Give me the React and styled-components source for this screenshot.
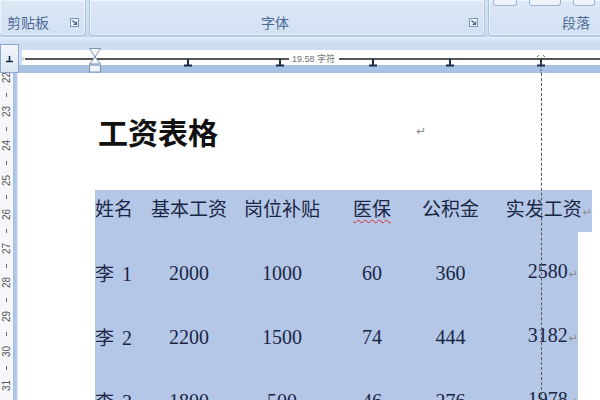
import { Fragment } from 'react';
import styled, { createGlobalStyle } from 'styled-components';

const GlobalStyle = createGlobalStyle`
  html, body {
    margin: 0;
    padding: 0;
    background: #fff;
    overflow: hidden;
  }
  body {
    font-family: "Noto Sans CJK SC", "Liberation Sans", sans-serif;
  }
`;

const Screen = styled.div`
  width: 600px;
  height: 400px;
  display: flex;
  flex-direction: column;
  overflow: hidden;
`;

const Ribbon = styled.div`
  height: 36px;
  flex-shrink: 0;
  display: flex;
  gap: 3px;
  background: linear-gradient(#d6e3f3, #cadcf1);
`;

const Group = styled.div`
  width: ${(p) => p.$w}px;
  margin-left: ${(p) => p.$ml || 0}px;
  flex-shrink: 0;
  display: flex;
  flex-direction: column;
  justify-content: space-between;
  border: 1px solid #adc4e0;
  border-top: none;
  border-radius: 0 0 4px 4px;
  background: linear-gradient(#dde8f6, #d2e1f3);
  box-shadow: inset 0 0 0 1px rgba(255, 255, 255, 0.55);
  box-sizing: border-box;
`;

const TopButtons = styled.div`
  display: flex;
  gap: 12px;
  padding-left: 4px;
  height: 7px;
`;

const MiniButton = styled.div`
  width: ${(p) => p.$w}px;
  height: 5px;
  border: 1px solid #9db4d4;
  border-top: none;
  border-radius: 0 0 3px 3px;
  background: #eef3fa;
`;

const LabelRow = styled.div`
  height: 20px;
  display: flex;
  align-items: center;
  padding: 0 6px 3px 0;
`;

const Label = styled.span`
  margin-left: ${(p) => p.$indent}px;
  font-size: 14px;
  line-height: 16px;
  color: #4d6a96;
`;

const Launcher = styled.svg`
  margin-left: auto;
  width: 9px;
  height: 9px;
`;

const Band = styled.div`
  height: 8px;
  flex-shrink: 0;
  background: linear-gradient(#e4edf8, #cbdcf0);
  border-top: 1px solid #c0d3ec;
  box-sizing: border-box;
`;

const RulerRow = styled.div`
  height: 29px;
  flex-shrink: 0;
  display: flex;
`;

const TabBox = styled.div`
  width: 19px;
  flex-shrink: 0;
  box-sizing: border-box;
  border: 1px solid #8eaad2;
  background: linear-gradient(#f2f6fb, #dce7f5);
  display: flex;
  align-items: center;
  justify-content: center;
`;

const HRuler = styled.div`
  flex: 1;
  position: relative;
  display: flex;
  flex-direction: column;
  background: #cfdef1;
`;

const RulerTop = styled.div`
  height: 6px;
  background: #cddcf0;
`;

const RulerWhite = styled.div`
  height: 15px;
  margin-left: 3px;
  background: #fff;
`;

const RulerBottom = styled.div`
  height: 8px;
  background: #a9c2e4;
`;

const RulerDrawing = styled.svg`
  position: absolute;
  inset: 0;
  width: 100%;
  height: 100%;
`;

const Body = styled.div`
  flex: 1;
  display: flex;
  min-height: 0;
`;

const VRuler = styled.div`
  width: 18px;
  flex-shrink: 0;
  display: flex;
`;

const VNumbers = styled.div`
  width: 13px;
  background: #f5f7fa;
  display: flex;
  flex-direction: column;
  align-items: center;
  overflow: hidden;
`;

const VList = styled.div`
  margin-top: -4px;
  display: flex;
  flex-direction: column;
  align-items: center;
`;

const VNum = styled.span`
  height: 17.1px;
  display: flex;
  align-items: center;
  font-family: "Liberation Sans", sans-serif;
  font-size: 10px;
  color: #555;
  transform: rotate(-90deg);
`;

const VTick = styled.span`
  height: 17.1px;
  display: flex;
  align-items: center;
  &::before {
    content: '';
    display: block;
    width: 1px;
    height: 4px;
    background: #666;
  }
`;

const VStrip = styled.div`
  width: 5px;
  background: linear-gradient(90deg, #a4bfe2, #b7cdea);
  border-right: 1px solid #dfe8f4;
  box-sizing: border-box;
`;

const Page = styled.div`
  flex: 1;
  position: relative;
  background: #fff;
  padding: 41px 0 0 77px;
`;

const TitleLine = styled.div`
  display: flex;
  align-items: center;
  height: 34px;
  margin-left: 3px;
`;

const Title = styled.h1`
  margin: 0;
  font-size: 30px;
  line-height: 34px;
  font-weight: 700;
  color: #111;
`;

const Mark = styled.span`
  font-family: "DejaVu Sans", sans-serif;
  font-size: ${(p) => p.$size || 11}px;
  color: #8a8a8a;
  margin-left: ${(p) => p.$ml || 1}px;
`;

const Table = styled.div`
  margin-top: 42px;
  color: #1a2644;
`;

const cols = '45px 98px 88px 92px 65px 1fr';

const HeadRow = styled.div`
  display: grid;
  grid-template-columns: ${cols};
  width: 497px;
  height: 42px;
  padding-top: 7px;
  box-sizing: border-box;
  background: #b4c7e7;
  align-items: start;
`;

const Rows = styled.div`
  width: 483px;
  padding-top: 9px;
  background: #b4c7e7;
`;

const Row = styled.div`
  display: grid;
  grid-template-columns: ${cols};
  height: 64px;
  align-items: center;
`;

const HeadCell = styled.div`
  text-align: ${(p) => p.$align || 'center'};
  font-size: 19px;
  line-height: 22px;
  white-space: nowrap;
`;

const Cell = styled.div`
  text-align: ${(p) => p.$align || 'center'};
  font-family: "Liberation Serif", "Noto Sans CJK SC", serif;
  font-size: 20px;
  line-height: 22px;
  white-space: nowrap;
`;

const Name = styled.span`
  font-family: "Noto Sans CJK SC", sans-serif;
  font-size: 19px;
  margin-right: 8px;
`;

const Spell = styled.span`
  text-decoration: underline wavy #d03030;
  text-decoration-thickness: 1px;
  text-underline-offset: 3px;
`;

const Guide = styled.div`
  position: absolute;
  left: 523px;
  top: 0;
  bottom: 0;
  border-left: 1px dashed #555;
`;

const data = [
  ['李', '1', '2000', '1000', '60', '360', '2580'],
  ['李', '2', '2200', '1500', '74', '444', '3182'],
  ['李', '3', '1800', '500', '46', '276', '1978'],
];

const vNums = [22, 23, 24, 25, 26, 27, 28, 29, 30, 31];

function LaunchIcon() {
  return (
    <Launcher viewBox="0 0 9 9">
      <rect x="0.5" y="0.5" width="8" height="8" fill="#eef3fa" stroke="#7d95b8" />
      <path d="M2.5 2.5 L6.5 6.5 M6.5 3.5 V6.5 H3.5" stroke="#4a6289" strokeWidth="1.2" fill="none" />
    </Launcher>
  );
}

function Tab({ x }) {
  return (
    <path d={`M${x} 59 V65 M${x - 4} 65.5 H${x + 4}`} stroke="#1c2a48" strokeWidth="2" fill="none" />
  );
}

export default function App() {
  return (
    <Screen>
      <GlobalStyle />
      <Ribbon>
        <Group $w={87} $ml={-1}>
          <span />
          <LabelRow>
            <Label $indent={7}>剪贴板</Label>
            <LaunchIcon />
          </LabelRow>
        </Group>
        <Group $w={396}>
          <span />
          <LabelRow>
            <Label $indent={171}>字体</Label>
            <LaunchIcon />
          </LabelRow>
        </Group>
        <Group $w={120}>
          <TopButtons>
            <MiniButton $w={22} />
            <MiniButton $w={30} />
            <MiniButton $w={20} />
          </TopButtons>
          <LabelRow>
            <Label $indent={73}>段落</Label>
          </LabelRow>
        </Group>
      </Ribbon>
      <Band />
      <RulerRow>
        <TabBox>
          <svg width="9" height="8" viewBox="0 0 9 8">
            <path d="M4.5 1 V6 M1 6.5 H8" stroke="#1c2a48" strokeWidth="1.6" fill="none" />
          </svg>
        </TabBox>
        <HRuler>
          <RulerTop />
          <RulerWhite />
          <RulerBottom />
          <RulerDrawing viewBox="19 44 581 29" preserveAspectRatio="none">
            <path d="M22 58 H24 M22 60 H24" stroke="#999" strokeWidth="0.8" />
            <path d="M25 59 H289 M339 59 H600" stroke="#1f1f1f" strokeWidth="1.3" />
            <text x="292" y="62" fontSize="9" fill="#6f6f6f" fontFamily="Liberation Sans, Noto Sans CJK SC, sans-serif">19.58 字符</text>
            <path d="M89.5 48.5 H100.5 L95 57 Z" fill="#f6f8fb" stroke="#7b92b3" />
            <path d="M95 57 L100.5 64 H89.5 Z" fill="#f6f8fb" stroke="#7b92b3" />
            <rect x="89.5" y="65" width="11" height="7" fill="#eef2f8" stroke="#7b92b3" />
            <Tab x={188} />
            <Tab x={280} />
            <Tab x={373} />
            <Tab x={450} />
            <Tab x={541} />
            <path d="M537 57 l2 -2 M545 57 l-2 -2" stroke="#555" strokeWidth="0.8" />
            <path d="M541 62 V73" stroke="#555" strokeDasharray="2 1.5" />
          </RulerDrawing>
        </HRuler>
      </RulerRow>
      <Body>
        <VRuler>
          <VNumbers>
            <VList>
              {vNums.map((n) => (
                <Fragment key={n}>
                  <VNum>{n}</VNum>
                  <VTick />
                </Fragment>
              ))}
            </VList>
          </VNumbers>
          <VStrip />
        </VRuler>
        <Page>
          <TitleLine>
            <Title>工资表格</Title>
            <Mark $ml={198} $size={12}>↵</Mark>
          </TitleLine>
          <Table>
            <HeadRow>
              <HeadCell $align="left">姓名</HeadCell>
              <HeadCell>基本工资</HeadCell>
              <HeadCell>岗位补贴</HeadCell>
              <HeadCell><Spell>医保</Spell></HeadCell>
              <HeadCell>公积金</HeadCell>
              <HeadCell $align="right">实发工资<Mark>↵</Mark></HeadCell>
            </HeadRow>
            <Rows>
              {data.map(([name, no, base, post, med, fund, net]) => (
                <Row key={no}>
                  <Cell $align="left"><Name>{name}</Name>{no}</Cell>
                  <Cell>{base}</Cell>
                  <Cell>{post}</Cell>
                  <Cell>{med}</Cell>
                  <Cell>{fund}</Cell>
                  <Cell $align="right">{net}<Mark>↵</Mark></Cell>
                </Row>
              ))}
            </Rows>
          </Table>
          <Guide />
        </Page>
      </Body>
    </Screen>
  );
}
